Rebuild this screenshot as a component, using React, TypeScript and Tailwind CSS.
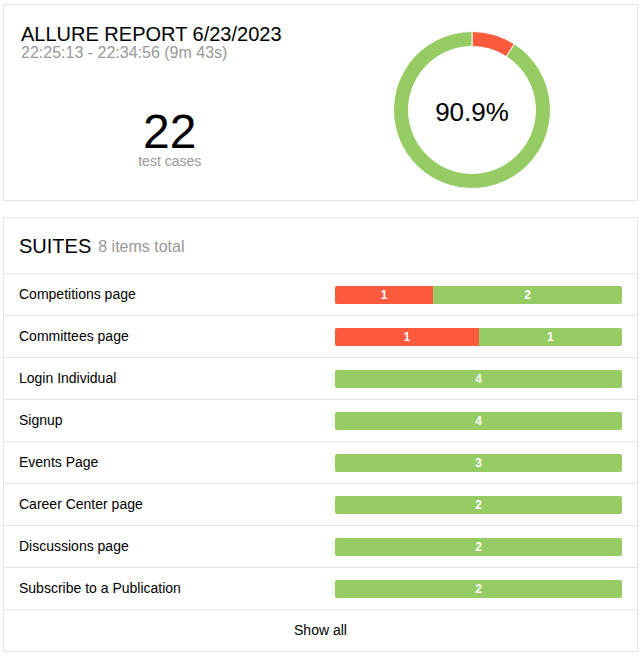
import React from "react";

const suites = [
  { name: "Competitions page", failed: 1, passed: 2 },
  { name: "Committees page", failed: 1, passed: 1 },
  { name: "Login Individual", failed: 0, passed: 4 },
  { name: "Signup", failed: 0, passed: 4 },
  { name: "Events Page", failed: 0, passed: 3 },
  { name: "Career Center page", failed: 0, passed: 2 },
  { name: "Discussions page", failed: 0, passed: 2 },
  { name: "Subscribe to a Publication", failed: 0, passed: 2 },
];

const Donut = () => {
  return (
    <svg width="160" height="160" viewBox="0 0 160 160">
      <path
        d="M80 1.5 A78.5 78.5 0 0 1 122.44 13.96 L114.33 26.58 A63.5 63.5 0 0 0 80 16.5 Z"
        fill="#fd5a3e"
        stroke="#fff"
        strokeWidth="1"
      />
      <path
        d="M122.44 13.96 A78.5 78.5 0 1 1 80 1.5 L80 16.5 A63.5 63.5 0 1 0 114.33 26.58 Z"
        fill="#97cc64"
        stroke="#fff"
        strokeWidth="1"
      />
      <text x="80" y="91" textAnchor="middle" fontSize="26" fill="#000" fontFamily="'Liberation Sans', Arial, sans-serif">
        90.9%
      </text>
    </svg>
  );
};

const Bar = ({ failed, passed }: { failed: number; passed: number }) => {
  const total = failed + passed;
  return (
    <div className="flex w-[287px] h-[18px] rounded-[2px] overflow-hidden text-[12px] leading-[18px] text-white font-semibold">
      {failed > 0 && (
        <div className="bg-[#fd5a3e] text-center" style={{ width: total === 3 ? "98px" : `${(failed / total) * 100}%` }}>
          {failed}
        </div>
      )}
      <div className="bg-[#97cc64] text-center flex-1">{passed}</div>
    </div>
  );
};

export default function App() {
  return (
    <div className="bg-white pt-[4px] pl-[3px] pb-[7px] text-black" style={{ fontFamily: "'Liberation Sans', Arial, Helvetica, sans-serif" }}>
      <div className="w-[635px] h-[197px] border border-[#e5e5e5] grid grid-cols-2 px-[15px]">
        <div className="flex flex-col pt-[18px] pl-[2px]">
          <div className="text-[20px] leading-[22px]">ALLURE REPORT 6/23/2023</div>
          <div className="text-[16px] leading-[18px] text-[#999] -mt-[1px]">22:25:13 - 22:34:56 (9m 43s)</div>
          <div className="flex flex-col items-center mt-[46px] -ml-[2px]">
            <div className="text-[48px] leading-[48px]">22</div>
            <div className="text-[14px] leading-[10px] text-[#999]">test cases</div>
          </div>
        </div>
        <div className="flex justify-center pt-[25px] pl-[1px]">
          <Donut />
        </div>
      </div>

      <div className="w-[635px] mt-[16px] border border-[#e5e5e5]">
        <div className="h-[56px] border-b border-[#e5e5e5] flex items-center px-[15px] pt-[1px]">
          <span className="text-[20px]">SUITES</span>
          <span className="text-[16px] text-[#999] ml-[7px] mt-[2px]">8 items total</span>
        </div>
        {suites.map((s) => (
          <div key={s.name} className="h-[42px] border-b border-[#e5e5e5] flex items-center pl-[15px] pr-[15px]">
            <div className="flex-1 text-[14px]">{s.name}</div>
            <Bar failed={s.failed} passed={s.passed} />
          </div>
        ))}
        <div className="h-[41px] flex items-center justify-center text-[14px]">Show all</div>
      </div>
    </div>
  );
}
